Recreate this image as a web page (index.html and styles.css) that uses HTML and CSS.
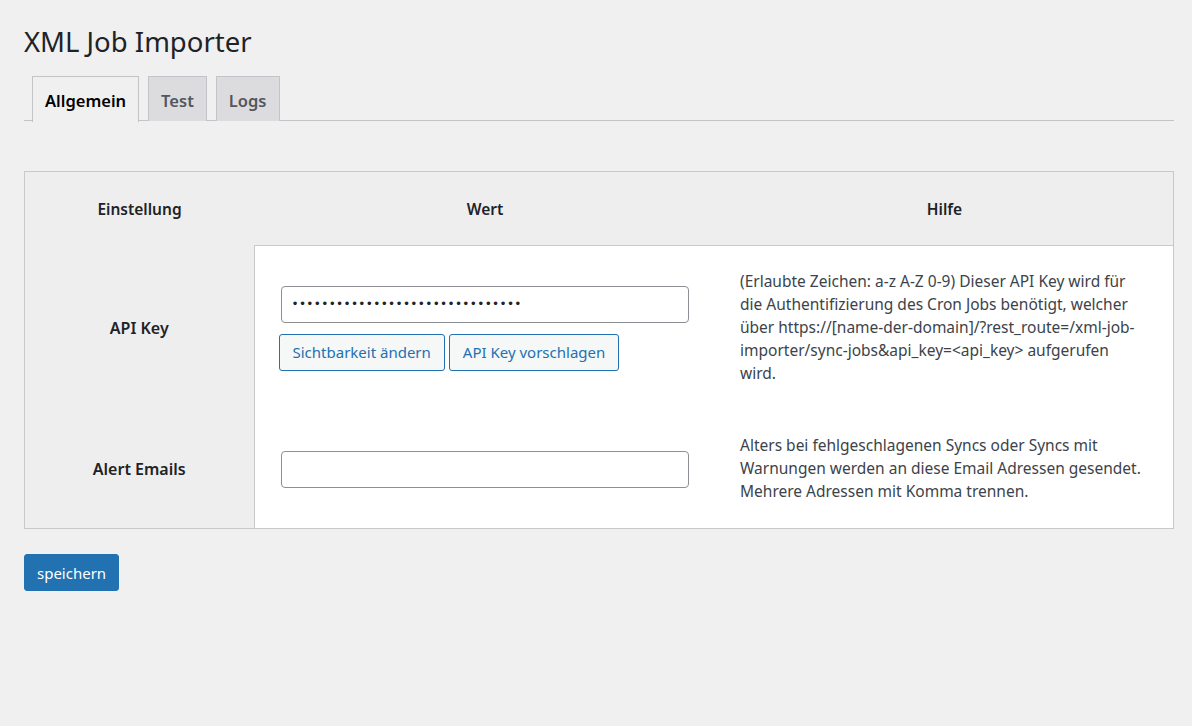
FILE: index.html
```html
<!DOCTYPE html>
<html lang="de">
<head>
<meta charset="utf-8">
<title>XML Job Importer</title>
<link rel="stylesheet" href="styles.css">
</head>
<body>
<div class="wrap">
  <h1 class="page-title">XML Job Importer</h1>
  <nav class="tabs">
    <a class="tab active">Allgemein</a>
    <a class="tab">Test</a>
    <a class="tab">Logs</a>
  </nav>

  <table class="settings">
    <thead>
      <tr>
        <th class="col-name">Einstellung</th>
        <th class="col-value">Wert</th>
        <th class="col-help">Hilfe</th>
      </tr>
    </thead>
    <tbody>
      <tr>
        <th class="label">API Key</th>
        <td class="value">
          <input class="field secret" type="text" value="•••••••••••••••••••••••••••••••">
          <div class="btn-row">
            <button class="btn">Sichtbarkeit ändern</button>
            <button class="btn">API Key vorschlagen</button>
          </div>
        </td>
        <td class="help">(Erlaubte Zeichen: a-z A-Z 0-9) Dieser API Key wird für<br>die Authentifizierung des Cron Jobs benötigt, welcher<br>über https://[name-der-domain]/?rest_route=/xml-job-<br>importer/sync-jobs&amp;api_key=&lt;api_key&gt; aufgerufen<br>wird.</td>
      </tr>
      <tr>
        <th class="label">Alert Emails</th>
        <td class="value">
          <input class="field" type="text" value="">
        </td>
        <td class="help">Alters bei fehlgeschlagenen Syncs oder Syncs mit<br>Warnungen werden an diese Email Adressen gesendet.<br>Mehrere Adressen mit Komma trennen.</td>
      </tr>
    </tbody>
  </table>

  <button class="btn-primary">speichern</button>
</div>
</body>
</html>
```
FILE: styles.css
```css
html, body {
  margin: 0;
  padding: 0;
  background: #f0f0f1;
}
body {
  font-family: "Noto Sans", "Open Sans", sans-serif;
  font-size: 15.5px;
  color: #3c434a;
}
.wrap {
  padding: 0 18px 0 24px;
}
.page-title {
  margin: 0;
  padding: 25px 0 0;
  font-size: 27.5px;
  font-weight: 400;
  line-height: 34px;
  color: #1d2327;
}
.tabs {
  display: flex;
  gap: 9px;
  padding-left: 8px;
  margin-top: 17px;
  border-bottom: 1px solid #c3c4c7;
  height: 44px;
}
.tab {
  display: block;
  box-sizing: border-box;
  height: 45px;
  padding: 2px 12px 0;
  line-height: 43px;
  font-size: 16.5px;
  font-weight: 600;
  color: #50575e;
  background: #dcdcde;
  border: 1px solid #c3c4c7;
  border-bottom: none;
  text-decoration: none;
}
.tab.active {
  background: #f0f0f1;
  color: #000;
  height: 46px;
}
.settings {
  margin-top: 50px;
  width: 100%;
  border-collapse: collapse;
  border: 1px solid #c9c9c9;
  background: #eeeeee;
}
.settings thead th {
  height: 73px;
  padding: 0;
  font-size: 15.5px;
  font-weight: 600;
  color: #1d2327;
  text-align: center;
  vertical-align: middle;
}
.col-name { width: 229px; }
.col-value { width: 462px; }
.settings .label {
  font-size: 16px;
  font-weight: 600;
  color: #1d2327;
  text-align: center;
  vertical-align: middle;
}
.settings .value,
.settings .help {
  background: #fff;
}
.settings tbody tr:first-child .value,
.settings tbody tr:first-child .help {
  border-top: 1px solid #c9c9c9;
}
.settings .value {
  border-left: 1px solid #c9c9c9;
  padding: 0 27px 0 26px;
  vertical-align: middle;
}
.settings .help {
  padding: 24px 24px 25px;
  line-height: 23px;
  vertical-align: middle;
}
.field {
  display: block;
  box-sizing: border-box;
  width: 100%;
  height: 37px;
  margin: 0;
  padding: 0 10px;
  border: 1px solid #8c8f94;
  border-radius: 4px;
  background: #fff;
  font-family: "Noto Sans", sans-serif;
  font-size: 15px;
  color: #2c3338;
}
.field.secret {
  font-family: "DejaVu Sans", sans-serif;
  font-size: 12px;
  letter-spacing: 0.35px;
  color: #1d2327;
}
.btn-row {
  display: flex;
  gap: 4px;
  margin: 11px 0 0 -2px;
}
.btn {
  box-sizing: border-box;
  height: 37px;
  padding: 0 13px;
  border: 1px solid #2271b1;
  border-radius: 3px;
  background: #f6f7f7;
  color: #2271b1;
  font-family: "Noto Sans", "Open Sans", sans-serif;
  font-size: 15px;
}
.btn-primary {
  display: block;
  box-sizing: border-box;
  margin-top: 25px;
  height: 37px;
  padding: 0 12px;
  border: 1px solid #2271b1;
  border-radius: 3px;
  background: #2271b1;
  color: #fff;
  font-family: "Noto Sans", "Open Sans", sans-serif;
  font-size: 15px;
}
```
